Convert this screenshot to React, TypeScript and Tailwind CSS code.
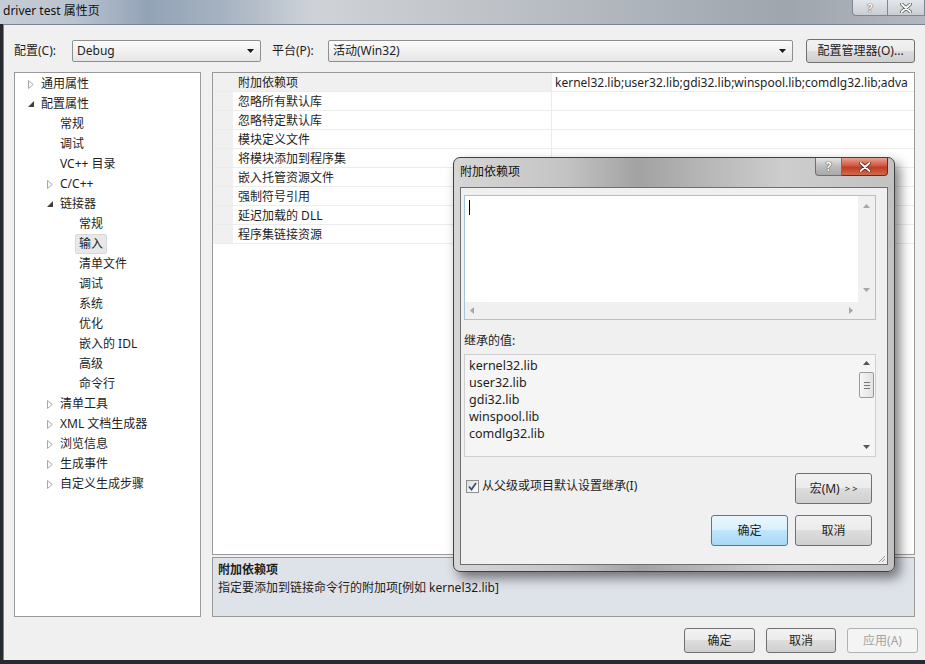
import React from "react";

const font = "font-['Noto_Sans','Noto_Sans_CJK_SC',sans-serif]";

type TreeNode = {
  label: string;
  level: 0 | 1 | 2;
  arrow?: "open" | "closed";
  selected?: boolean;
};

const tree: TreeNode[] = [
  { label: "通用属性", level: 0, arrow: "closed" },
  { label: "配置属性", level: 0, arrow: "open" },
  { label: "常规", level: 1 },
  { label: "调试", level: 1 },
  { label: "VC++ 目录", level: 1 },
  { label: "C/C++", level: 1, arrow: "closed" },
  { label: "链接器", level: 1, arrow: "open" },
  { label: "常规", level: 2 },
  { label: "输入", level: 2, selected: true },
  { label: "清单文件", level: 2 },
  { label: "调试", level: 2 },
  { label: "系统", level: 2 },
  { label: "优化", level: 2 },
  { label: "嵌入的 IDL", level: 2 },
  { label: "高级", level: 2 },
  { label: "命令行", level: 2 },
  { label: "清单工具", level: 1, arrow: "closed" },
  { label: "XML 文档生成器", level: 1, arrow: "closed" },
  { label: "浏览信息", level: 1, arrow: "closed" },
  { label: "生成事件", level: 1, arrow: "closed" },
  { label: "自定义生成步骤", level: 1, arrow: "closed" },
];

const indent = { 0: "pl-0", 1: "pl-[19px]", 2: "pl-[38px]" };

const props = [
  "附加依赖项",
  "忽略所有默认库",
  "忽略特定默认库",
  "模块定义文件",
  "将模块添加到程序集",
  "嵌入托管资源文件",
  "强制符号引用",
  "延迟加载的 DLL",
  "程序集链接资源",
];

const inherited = ["kernel32.lib", "user32.lib", "gdi32.lib", "winspool.lib", "comdlg32.lib"];

const btnStyles = {
  normal:
    "border-[#707070] bg-[linear-gradient(#f2f2f2_0%,#ebebeb_49%,#dddddd_50%,#cfcfcf_100%)] text-[#1e1e1e]",
  primary:
    "border-[#3c7fb1] bg-[linear-gradient(#eaf6fd_0%,#d9f0fc_49%,#bee6fd_50%,#a7d9f5_100%)] text-[#1e1e1e]",
  disabled: "border-[#adb2b5] bg-[#f4f4f4] text-[#a3a3a3]",
};

function Btn({
  children,
  className = "",
  variant = "normal",
}: {
  children: React.ReactNode;
  className?: string;
  variant?: "normal" | "primary" | "disabled";
}) {
  return (
    <div
      className={`flex items-center justify-center rounded-[3px] border ${btnStyles[variant]} ${className}`}
    >
      {children}
    </div>
  );
}

function Arrow({ dir, color }: { dir: "up" | "down" | "left" | "right"; color: string }) {
  const d = {
    up: "M0 4 L3.5 0 L7 4 Z",
    down: "M0 0 L7 0 L3.5 4 Z",
    left: "M4 0 L4 7 L0 3.5 Z",
    right: "M0 0 L4 3.5 L0 7 Z",
  }[dir];
  const horiz = dir === "left" || dir === "right";
  return (
    <svg width={horiz ? 4 : 7} height={horiz ? 7 : 4} viewBox={horiz ? "0 0 4 7" : "0 0 7 4"}>
      <path d={d} fill={color} />
    </svg>
  );
}

function TreeArrow({ kind }: { kind: "open" | "closed" }) {
  if (kind === "closed") {
    return (
      <svg width="6" height="9" viewBox="0 0 6 9">
        <path d="M0.5 0.5 L5.2 4.5 L0.5 8.5 Z" fill="#fff" stroke="#a8a8a8" />
      </svg>
    );
  }
  return (
    <svg width="6" height="6" viewBox="0 0 6 6">
      <path d="M6 0 L6 6 L0 6 Z" fill="#404040" />
    </svg>
  );
}

function Combo({ value, className }: { value: string; className: string }) {
  return (
    <div
      className={`flex h-[22px] items-center justify-between rounded-[2px] border border-[#8e8f8f] bg-[linear-gradient(#fbfbfb_0%,#f1f1f1_50%,#e6e6e6_100%)] pl-[4px] pr-[6px] ${className}`}
    >
      <span>{value}</span>
      <Arrow dir="down" color="#1a1a1a" />
    </div>
  );
}

function CaptionX({ dark }: { dark: string }) {
  return (
    <svg width="12" height="10" viewBox="0 0 12 10">
      <path d="M1.5 1 L10.5 9 M10.5 1 L1.5 9" stroke={dark} strokeWidth="3.4" strokeLinecap="round" />
      <path d="M1.5 1 L10.5 9 M10.5 1 L1.5 9" stroke="#fff" strokeWidth="1.8" strokeLinecap="round" />
    </svg>
  );
}

export default function App() {
  return (
    <div
      className={`relative h-[664px] w-[925px] overflow-hidden bg-[#262a31] text-[12px] leading-[16px] text-[#1e1e1e] ${font}`}
    >
      {/* 标题栏 */}
      <div className="flex h-[24px] items-start justify-between bg-[linear-gradient(90deg,#c5cdd6_0%,#b9c3cf_8%,#93a3b6_16%,#a5b2c1_24%,#cfd3d8_34%,#c1c5ca_50%,#adb3ba_70%,#9fa5ad_85%,#b3b8be_100%)]">
        <span className="pl-[3px] pt-[3px] text-[#101010]">driver test 属性页</span>
        <div className="flex">
          <div className="flex h-[16px] w-[36px] items-center justify-center rounded-bl-[4px] border border-t-0 border-[#7d8791] bg-[linear-gradient(#e3e6ea_0%,#c9ced4_100%)] text-[11px] font-bold text-white [text-shadow:0_0_1px_#444,0_0_1px_#444]">
            ?
          </div>
          <div className="flex h-[16px] w-[37px] items-center justify-center border border-l-0 border-t-0 border-[#7d8791] bg-[linear-gradient(#e3e6ea_0%,#c9ced4_100%)]">
            <CaptionX dark="#555" />
          </div>
        </div>
      </div>

      {/* 窗口主体 */}
      <div className="ml-[3px] flex h-[636px] flex-col border-l border-t border-[#7b8591] bg-[#f0f0f0] pt-[13px]">
        {/* 配置/平台 */}
        <div className="flex h-[26px] items-center pl-[10px]">
          <span className="w-[58px]">配置(C):</span>
          <Combo value="Debug" className="w-[189px]" />
          <span className="ml-[11px] w-[56px]">平台(P):</span>
          <Combo value="活动(Win32)" className="w-[465px]" />
          <Btn className="ml-[13px] h-[24px] w-[109px]">配置管理器(O)...</Btn>
        </div>

        <div className="mt-[8px] flex h-[545px] gap-[11px] pl-[10px]">
          {/* 左侧树 */}
          <div className="w-[187px] border border-[#9a9a9a] bg-white pt-[1px]">
            {tree.map((n, i) => (
              <div key={i} className={`flex h-[20px] items-center ${indent[n.level]}`}>
                <div className="flex w-[26px] items-center pl-[13px]">
                  {n.arrow && <TreeArrow kind={n.arrow} />}
                </div>
                {n.selected ? (
                  <span className="-ml-[4px] flex h-[20px] items-center rounded-[2px] border border-[#d9d9d9] bg-[#e8e8e8] px-[3px]">
                    {n.label}
                  </span>
                ) : (
                  <span>{n.label}</span>
                )}
              </div>
            ))}
          </div>

          {/* 右侧属性表 */}
          <div className="flex w-[703px] flex-col">
            <div className="h-[483px] border border-[#9a9a9a] bg-white">
              {props.map((p, i) => (
                <div key={i} className="flex h-[19px] border-b border-[#ececec] pt-[2px]">
                  <div className="-mt-[2px] w-[20px] bg-[#f0f0f0]" />
                  <div
                    className={`-mt-[2px] flex w-[319px] items-center border-r border-[#ececec] pl-[5px] pt-[2px] ${
                      i === 0 ? "bg-[#f0f0f0]" : ""
                    }`}
                  >
                    {p}
                  </div>
                  <div className="flex min-w-0 flex-1 items-center overflow-hidden whitespace-nowrap pl-[3px]">
                    {i === 0 ? "kernel32.lib;user32.lib;gdi32.lib;winspool.lib;comdlg32.lib;adva" : ""}
                  </div>
                </div>
              ))}
            </div>
            <div className="mt-[2px] h-[60px] border border-[#9a9a9a] bg-[#dee2e9] pl-[5px] pt-[4px]">
              <div className="font-bold">附加依赖项</div>
              <div className="mt-[2px]">指定要添加到链接命令行的附加项[例如 kernel32.lib]</div>
            </div>
          </div>
        </div>

        {/* 底部按钮 */}
        <div className="mt-[11px] flex h-[25px] justify-end gap-[11px] pr-[7px]">
          <Btn className="h-[25px] w-[71px]">确定</Btn>
          <Btn className="h-[25px] w-[70px]">取消</Btn>
          <Btn className="h-[25px] w-[71px]" variant="disabled">
            应用(A)
          </Btn>
        </div>
      </div>

      {/* 附加依赖项 对话框 */}
      <div className="absolute left-[453px] top-[157px] flex h-[415px] w-[442px] flex-col rounded-[7px] border border-[#404040] bg-[linear-gradient(90deg,#d6d6d6_0%,#c4c4c4_25%,#a2a2a2_42%,#b4b4b4_55%,#cdcdcd_75%,#c2c2c2_100%)] shadow-[5px_6px_12px_rgba(0,0,0,0.5)]">
        <div className="flex h-[29px] items-start justify-between">
          <span className="pl-[6px] pt-[6px] text-[#111]">附加依赖项</span>
          <div className="mr-[6px] flex">
            <div className="flex h-[18px] w-[27px] items-center justify-center rounded-bl-[4px] border border-t-0 border-[#6e6e6e] bg-[linear-gradient(#e6e6e6_0%,#bdbdbd_50%,#a9a9a9_100%)] text-[12px] font-bold text-white [text-shadow:0_0_1px_#333,0_0_1px_#333]">
              ?
            </div>
            <div className="flex h-[18px] w-[46px] items-center justify-center rounded-br-[4px] border border-l-0 border-t-0 border-[#6b2a20] bg-[linear-gradient(#e8a493_0%,#d0583e_45%,#c23c23_55%,#d26a4c_100%)]">
              <CaptionX dark="#5a1c12" />
            </div>
          </div>
        </div>

        <div className="relative mx-[6px] mb-[6px] flex flex-1 flex-col border border-[#6e6e6e] bg-[#f0f0f0] pl-[3px]">
          {/* 编辑框 */}
          <div className="mt-[7px] flex h-[125px] w-[412px] border border-[#a5c3dc] bg-white">
            <div className="flex flex-1 flex-col">
              <div className="flex-1 pl-[4px] pt-[4px]">
                <div className="h-[15px] w-[1px] bg-black" />
              </div>
              <div className="flex h-[17px] items-center justify-between bg-[#f0f0f0] px-[5px]">
                <Arrow dir="left" color="#a6a6a6" />
                <Arrow dir="right" color="#a6a6a6" />
              </div>
            </div>
            <div className="flex w-[17px] flex-col items-center bg-[#f0f0f0] pb-[27px] pt-[8px]">
              <Arrow dir="up" color="#a6a6a6" />
              <div className="flex-1" />
              <Arrow dir="down" color="#a6a6a6" />
            </div>
          </div>

          <div className="mt-[13px] h-[16px]">继承的值:</div>

          {/* 继承值列表 */}
          <div className="mt-[5px] flex h-[103px] w-[412px] border border-[#cfcfcf] bg-[#f5f5f5]">
            <div className="flex-1 pl-[4px] pt-[2px] text-[12.5px] leading-[17px]">
              {inherited.map((l) => (
                <div key={l}>{l}</div>
              ))}
            </div>
            <div className="flex w-[17px] flex-col items-center pb-[7px] pt-[6px]">
              <Arrow dir="up" color="#555" />
              <div className="mt-[7px] flex h-[26px] w-[15px] flex-col items-center justify-center gap-[2px] rounded-[2px] border border-[#9a9a9a] bg-[linear-gradient(90deg,#f6f6f6_0%,#e2e2e2_100%)]">
                <div className="h-[1px] w-[6px] bg-[#777]" />
                <div className="h-[1px] w-[6px] bg-[#777]" />
                <div className="h-[1px] w-[6px] bg-[#777]" />
              </div>
              <div className="flex-1" />
              <Arrow dir="down" color="#555" />
            </div>
          </div>

          {/* 继承复选框 + 宏 */}
          <div className="mt-[16px] flex w-[412px] items-start justify-between pr-[4px]">
            <div className="ml-[2px] mt-[5px] flex items-center gap-[3px]">
              <div className="flex h-[13px] w-[13px] items-center justify-center border border-[#8e8f8f] bg-[linear-gradient(135deg,#dcdcdc_0%,#ffffff_100%)]">
                <svg width="9" height="9" viewBox="0 0 9 9">
                  <path d="M1 4.5 L3.5 7.5 L8 1" fill="none" stroke="#3a4f7a" strokeWidth="1.8" />
                </svg>
              </div>
              <span>从父级或项目默认设置继承(I)</span>
            </div>
            <Btn className="h-[31px] w-[77px]">
              宏(M)<span className="ml-[5px] text-[9px]">&gt; &gt;</span>
            </Btn>
          </div>

          <div className="mt-[11px] flex w-[412px] justify-end gap-[7px] pr-[4px]">
            <Btn className="h-[31px] w-[77px]" variant="primary">
              确定
            </Btn>
            <Btn className="h-[31px] w-[77px]">取消</Btn>
          </div>

          {/* 尺寸调整手柄 */}
          <svg className="absolute bottom-[1px] right-[1px]" width="9" height="9" viewBox="0 0 9 9">
            <path d="M8 2 L2 8 M8 5 L5 8" stroke="#9a9a9a" strokeWidth="1" />
          </svg>
        </div>
      </div>
    </div>
  );
}
